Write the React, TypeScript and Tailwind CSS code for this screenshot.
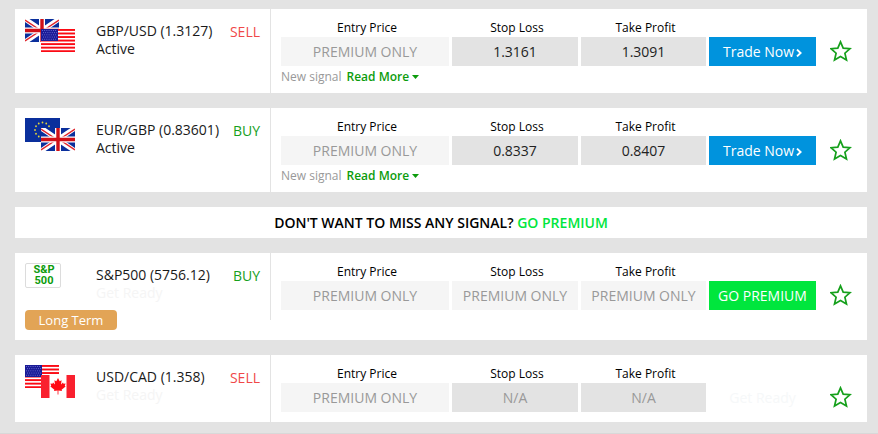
import { useState } from "react";
import type { ReactNode } from "react";

type Field = { label: string; value: string; kind: "locked" | "value" | "empty" };

type Signal = {
  id: string;
  pair: string;
  status: string;
  ready: boolean;
  side: "BUY" | "SELL";
  icon: ReactNode;
  values: [Field, Field, Field];
  action: "trade" | "premium" | "ready";
  note?: string;
  tag?: string;
};

function BritishFlag() {
  return (
    <svg viewBox="0 0 34 23" className="block h-[23px] w-[34px]" aria-label="United Kingdom">
      <rect width="34" height="23" fill="#0a2f9c" />
      <path d="M0 0L34 23M34 0L0 23" stroke="#fff" strokeWidth="5" />
      <path d="M0 1L15 11M34 1L19 11M0 22L15 12M34 22L19 12" stroke="#e0262e" strokeWidth="1.5" />
      <path d="M17 0V23M0 11.5H34" stroke="#fff" strokeWidth="6" />
      <path d="M17 0V23M0 11.5H34" stroke="#d01018" strokeWidth="3.4" />
    </svg>
  );
}

function AmericanFlag() {
  return (
    <svg viewBox="0 0 34 23" className="block h-[23px] w-[34px]" aria-label="United States">
      <rect width="34" height="23" fill="#fff" />
      {[0, 1, 2, 3, 4, 5, 6].map((i) => (
        <rect key={i} y={i * 3.54} width="34" height="1.9" fill="#fb0a14" />
      ))}
      <rect width="17" height="12" fill="#1a1a96" />
      {[0, 1, 2, 3, 4].map((row) =>
        [0, 1, 2, 3, 4, 5, 6].map((col) => (
          <rect
            key={`${row}-${col}`}
            x={1 + col * 2.2 + (row % 2)}
            y={1 + row * 2.2}
            width="0.9"
            height="0.9"
            fill="#7478d8"
          />
        )),
      )}
    </svg>
  );
}

function EuropeanFlag() {
  return (
    <svg viewBox="0 0 35 24" className="block h-6 w-[35px]" aria-label="European Union">
      <rect width="35" height="24" fill="#0a2f9c" />
      {Array.from({ length: 12 }, (_, i) => {
        const a = (i * Math.PI) / 6;
        return (
          <circle key={i} cx={17.5 + 7.5 * Math.sin(a)} cy={12 - 7.5 * Math.cos(a)} r="0.9" fill="#e6d63a" />
        );
      })}
    </svg>
  );
}

function CanadianFlag() {
  return (
    <svg viewBox="0 0 34 23" className="block h-[23px] w-[34px]" aria-label="Canada">
      <rect width="34" height="23" fill="#fff" />
      <rect width="8.5" height="23" fill="#f9202e" />
      <rect x="25.5" width="8.5" height="23" fill="#f9202e" />
      <path
        d="M17 3L18.700 6.200L20.600 5.300L20 9.500L22 7.600L22.500 8.800L24.600 8.500L23.800 10.800L24.600 11.500L20.600 14.700L21 16L17.400 15.600V19.500H16.600V15.600L13 16L13.400 14.700L9.400 11.500L10.200 10.800L9.400 8.500L11.500 8.800L12 7.600L14 9.500L13.400 5.300L15.300 6.200Z"
        fill="#ff0a14"
      />
    </svg>
  );
}

function FlagPair({ back, front }: { back: ReactNode; front: ReactNode }) {
  return (
    <div className="relative h-[33px] w-[50px]">
      {back}
      <div className="absolute right-0 bottom-0">{front}</div>
    </div>
  );
}

function IndexBadge() {
  return (
    <p className="h-[25px] w-9 rounded-xs border border-[#dcdcdc] pl-0.5 text-center font-['Roboto',sans-serif] text-[11px] leading-[11px] font-bold text-[#0c9c0c]">
      S&amp;P
      <br />
      500
    </p>
  );
}

function locked(label: string): Field {
  return { label, value: "PREMIUM ONLY", kind: "locked" };
}

const signals: Signal[] = [
  {
    id: "gbpusd",
    pair: "GBP/USD (1.3127)",
    status: "Active",
    ready: false,
    side: "SELL",
    icon: <FlagPair back={<BritishFlag />} front={<AmericanFlag />} />,
    values: [
      locked("Entry Price"),
      { label: "Stop Loss", value: "1.3161", kind: "value" },
      { label: "Take Profit", value: "1.3091", kind: "value" },
    ],
    action: "trade",
    note: "New signal",
  },
  {
    id: "eurgbp",
    pair: "EUR/GBP (0.83601)",
    status: "Active",
    ready: false,
    side: "BUY",
    icon: <FlagPair back={<EuropeanFlag />} front={<BritishFlag />} />,
    values: [
      locked("Entry Price"),
      { label: "Stop Loss", value: "0.8337", kind: "value" },
      { label: "Take Profit", value: "0.8407", kind: "value" },
    ],
    action: "trade",
    note: "New signal",
  },
  {
    id: "sp500",
    pair: "S&P500 (5756.12)",
    status: "Get Ready",
    ready: true,
    side: "BUY",
    icon: <IndexBadge />,
    values: [locked("Entry Price"), locked("Stop Loss"), locked("Take Profit")],
    action: "premium",
    tag: "Long Term",
  },
  {
    id: "usdcad",
    pair: "USD/CAD (1.358)",
    status: "Get Ready",
    ready: true,
    side: "SELL",
    icon: <FlagPair back={<AmericanFlag />} front={<CanadianFlag />} />,
    values: [
      locked("Entry Price"),
      { label: "Stop Loss", value: "N/A", kind: "empty" },
      { label: "Take Profit", value: "N/A", kind: "empty" },
    ],
    action: "ready",
  },
];

const fieldStyle = {
  locked: "bg-[#f5f5f5] text-[#999999]",
  value: "bg-[#e3e3e3] text-[#222222]",
  empty: "bg-[#e3e3e3] text-[#999999]",
};

function Action({ kind }: { kind: Signal["action"] }) {
  if (kind === "trade") {
    return (
      <button className="flex h-[29px] items-center justify-center gap-0.5 bg-[#0093dd] text-sm font-medium whitespace-nowrap text-white">
        Trade Now
        <svg viewBox="0 0 6 8" className="mt-0.5 h-2 w-1.5" fill="none" stroke="currentColor" strokeWidth="1.9">
          <path d="M1 0.600L4.600 4L1 7.400" />
        </svg>
      </button>
    );
  }
  if (kind === "premium") {
    return (
      <button className="h-[29px] bg-[#00e63d] text-sm leading-[29px] font-medium whitespace-nowrap text-white">
        GO PREMIUM
      </button>
    );
  }
  return <div className="h-[29px] text-center text-sm leading-[29px] font-medium text-[#f6f8f9]">Get Ready</div>;
}

function FavouriteButton({ name }: { name: string }) {
  const [on, setOn] = useState(false);
  return (
    <button
      aria-label={`Add ${name} to favourites`}
      aria-pressed={on}
      onClick={() => setOn(!on)}
      className="mt-[31px] h-[22px] w-[22px] shrink-0"
    >
      <svg viewBox="0 0 22 22" className="block h-[22px] w-[22px]">
        <path
          d="M10.500 1.800L13.200 8.100L20 8.700L14.900 13.200L16.500 20L10.500 16.500L4.500 20L6.100 13.200L1 8.700L7.800 8.100Z"
          fill={on ? "#16a01c" : "none"}
          stroke="#16a01c"
          strokeWidth="1.7"
        />
      </svg>
    </button>
  );
}

function SignalCard({ signal }: { signal: Signal }) {
  return (
    <article className="flex items-start bg-white">
      <div className="w-[255px] shrink-0 px-2.5 pt-2.5">
        <div className="flex h-[47px] items-start">
          <div className="w-[71px] shrink-0">{signal.icon}</div>
          <div className="mt-[3px] flex-1 text-sm leading-[18px] whitespace-nowrap text-[#1a1a1a]">
            <h2>{signal.pair}</h2>
            <p className={signal.ready ? "text-[#f5f5f5]" : ""}>{signal.status}</p>
          </div>
          <p
            className={`mt-1 text-sm leading-[18px] ${signal.side === "SELL" ? "text-[#f04848]" : "text-[#16a01c]"}`}
          >
            {signal.side}
          </p>
        </div>
        {signal.tag && (
          <p className="mb-2.5 h-5 w-[92px] rounded-sm bg-[#e2a456] text-center text-[13px] leading-5 text-white">
            {signal.tag}
          </p>
        )}
      </div>
      <div className="flex flex-1 items-start border-l border-[#e3e3e3] pr-[15px] pl-2.5">
        <div className="flex-1 pt-2.5">
          <div className="grid grid-cols-[168fr_126fr_125fr_107fr] items-end gap-[3px]">
            {signal.values.map((field) => (
              <dl key={field.label} className="text-center whitespace-nowrap">
                <dt className="pl-1 text-xs leading-[18px] text-black">{field.label}</dt>
                <dd className={`h-[29px] text-sm leading-[29px] ${fieldStyle[field.kind]}`}>{field.value}</dd>
              </dl>
            ))}
            <Action kind={signal.action} />
          </div>
          {signal.note ? (
            <div className="mb-[5px] flex gap-[5px] text-xs leading-[22px] text-[#999999]">
              <span>{signal.note}</span>
              <button className="flex items-center gap-[3px] font-semibold text-[#0c9c0c]">
                Read More
                <svg viewBox="0 0 7 4" className="h-1 w-[7px]" fill="currentColor">
                  <path d="M0 0H7L3.500 4Z" />
                </svg>
              </button>
            </div>
          ) : (
            <div className="h-2.5" />
          )}
        </div>
        <div className="pl-3.5">
          <FavouriteButton name={signal.pair} />
        </div>
      </div>
    </article>
  );
}

export default function App() {
  return (
    <main className="flex min-h-screen flex-col gap-[15px] border-b border-[#d8d8d8] bg-[#e3e3e3] pt-[9px] pr-[11px] pb-[11px] pl-[15px] font-['Open_Sans',sans-serif]">
      {signals.slice(0, 2).map((s) => (
        <SignalCard key={s.id} signal={s} />
      ))}
      <p className="bg-white text-center text-sm leading-[31px] font-semibold text-black">
        DON'T WANT TO MISS ANY SIGNAL?{" "}
        <a href="#premium" className="text-[#00e63d]">
          GO PREMIUM
        </a>
      </p>
      {signals.slice(2).map((s) => (
        <SignalCard key={s.id} signal={s} />
      ))}
    </main>
  );
}
